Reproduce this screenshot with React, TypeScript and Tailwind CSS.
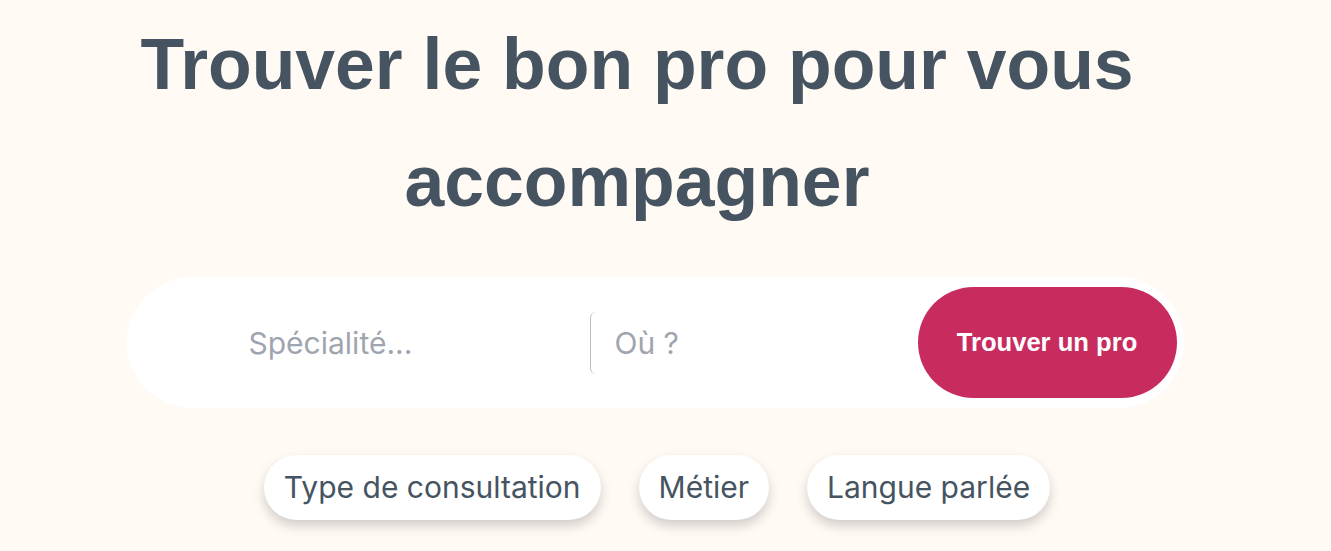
export default function App() {
  const filters = ["Type de consultation", "Métier", "Langue parlée"];

  return (
    <div className="min-h-screen w-full bg-[#fffaf4] pr-[21px] pt-[6px]">
      <h1 className="mx-auto pr-[36px] text-center text-[71.5px] font-bold leading-[117px] text-[#465461] font-['Liberation_Sans',Arial,sans-serif]">
        Trouver le bon pro pour vous
        <br />
        accompagner
      </h1>

      <div className="mx-auto mt-[37px] flex h-[131px] w-[1057px] items-center rounded-full bg-white py-[10px] pr-[7px]">
        <input
          type="text"
          placeholder="Spécialité..."
          className="h-full w-[463px] shrink-0 bg-transparent pl-[122px] text-[30px] text-[#465461] outline-none placeholder:text-[#9fa5ae] font-['Inter',sans-serif]"
        />
        <input
          type="text"
          placeholder="Où ?"
          className="h-[62px] min-w-0 flex-1 rounded-[6px] border-l border-[#b9bcc2] bg-transparent pl-[24px] text-[30px] text-[#465461] outline-none placeholder:text-[#9fa5ae] font-['Inter',sans-serif]"
        />
        <button className="h-[111px] w-[259px] shrink-0 whitespace-nowrap rounded-full bg-[#c82c5f] text-[25.6px] font-bold text-white font-['Liberation_Sans',Arial,sans-serif]">
          Trouver un pro
        </button>
      </div>

      <div className="mt-[47px] flex items-center justify-center gap-[38px] pl-[4px]">
        {filters.map((f) => (
          <button
            key={f}
            className="h-[65px] whitespace-nowrap rounded-full bg-white px-[20px] text-[30px] text-[#465461] shadow-[0_6px_12px_rgba(0,0,0,0.18)] font-['Inter',sans-serif]"
          >
            {f}
          </button>
        ))}
      </div>
    </div>
  );
}
